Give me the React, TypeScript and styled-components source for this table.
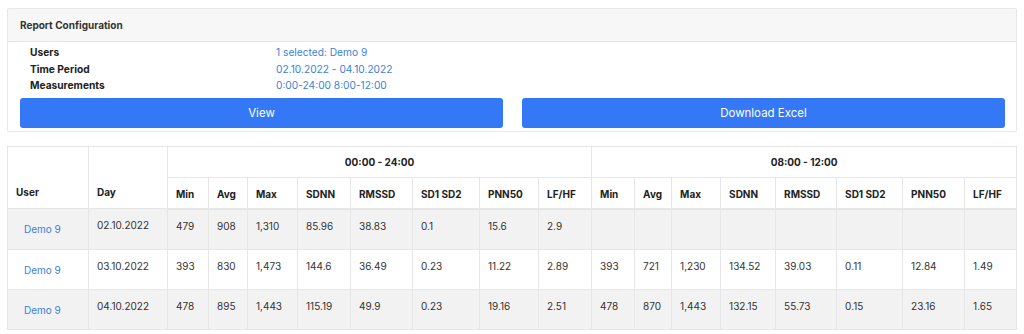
import React from "react";
import styled, { createGlobalStyle } from "styled-components";

const GlobalStyle = createGlobalStyle`
  body {
    margin: 0;
    background: #ffffff;
    font-family: Inter, "Liberation Sans", Arial, sans-serif;
    color: #2b2b2b;
  }
`;

const Page = styled.div`
  padding: 8px 8px 0 7px;
  display: flex;
  flex-direction: column;
  gap: 14px;
`;

const Card = styled.section`
  width: 1008px;
  border: 1px solid #e8e8e8;
  border-radius: 2px;
  background: #fff;
`;

const CardHeader = styled.div`
  height: 32px;
  display: flex;
  align-items: center;
  padding: 0 12px;
  background: #f7f7f7;
  border-bottom: 1px solid #e4e4e4;
  font-size: 10px;
  font-weight: 700;
  color: #333;
`;

const CardBody = styled.div`
  padding: 2px 11px 3px 12px;
`;

const ConfigList = styled.div`
  display: grid;
  grid-template-columns: 256px 1fr;
  font-size: 10.2px;
  line-height: 16.5px;
`;

const ConfigLabel = styled.div`
  padding-left: 10px;
  font-weight: 700;
  color: #222;
`;

const ConfigValue = styled.div`
  color: #3d7fd8;
`;

const Actions = styled.div`
  display: grid;
  grid-template-columns: 1fr 1fr;
  gap: 19px;
  margin-top: 4px;
`;

const ActionButton = styled.button`
  height: 30px;
  border: none;
  border-radius: 3px;
  background: #3478f6;
  color: #fff;
  font-family: inherit;
  font-size: 11.5px;
  cursor: pointer;
`;

const Table = styled.table`
  width: 1009px;
  border-collapse: collapse;
  table-layout: fixed;
  font-size: 10px;
  line-height: 14px;
  color: #333;
`;

const Col = styled.col<{ $w: number }>`
  width: ${(p) => p.$w}px;
`;

const Th = styled.th`
  border: 1px solid #e6e6e6;
  padding: 0 8px 9px;
  font-weight: 700;
  text-align: left;
  vertical-align: bottom;
  color: #222;
`;

const GroupTh = styled(Th)`
  padding: 8px 8px;
  vertical-align: middle;
  text-align: center;
`;

const SubTh = styled(Th)`
  padding: 9px 8px 7px;
  vertical-align: middle;
  border-bottom-width: 2px;
`;

const Tr = styled.tr<{ $striped: boolean }>`
  background: ${(p) => (p.$striped ? "#f2f2f2" : "#fff")};
`;

const Td = styled.td`
  border: 1px solid #e6e6e6;
  padding: 9px 8px 16px;
  vertical-align: top;
`;

const UserTd = styled(Td)`
  padding: 13px 8px 12px 16px;
`;

const UserLink = styled.a`
  color: #3d7fd8;
  text-decoration: none;
`;

const colWidths = [
  81, 79, 41, 39, 50, 53, 62, 67, 59, 53, 43, 37, 49, 55, 61, 66, 62, 52,
];

const metrics = ["Min", "Avg", "Max", "SDNN", "RMSSD", "SD1 SD2", "PNN50", "LF/HF"];

const rows = [
  {
    day: "02.10.2022",
    a: ["479", "908", "1,310", "85.96", "38.83", "0.1", "15.6", "2.9"],
    b: ["", "", "", "", "", "", "", ""],
  },
  {
    day: "03.10.2022",
    a: ["393", "830", "1,473", "144.6", "36.49", "0.23", "11.22", "2.89"],
    b: ["393", "721", "1,230", "134.52", "39.03", "0.11", "12.84", "1.49"],
  },
  {
    day: "04.10.2022",
    a: ["478", "895", "1,443", "115.19", "49.9", "0.23", "19.16", "2.51"],
    b: ["478", "870", "1,443", "132.15", "55.73", "0.15", "23.16", "1.65"],
  },
];

export default function App() {
  return (
    <>
      <GlobalStyle />
      <Page>
        <Card>
          <CardHeader>Report Configuration</CardHeader>
          <CardBody>
            <ConfigList>
              <ConfigLabel>Users</ConfigLabel>
              <ConfigValue>1 selected: Demo 9</ConfigValue>
              <ConfigLabel>Time Period</ConfigLabel>
              <ConfigValue>02.10.2022 - 04.10.2022</ConfigValue>
              <ConfigLabel>Measurements</ConfigLabel>
              <ConfigValue>0:00-24:00 8:00-12:00</ConfigValue>
            </ConfigList>
            <Actions>
              <ActionButton>View</ActionButton>
              <ActionButton>Download Excel</ActionButton>
            </Actions>
          </CardBody>
        </Card>

        <Table>
          <colgroup>
            {colWidths.map((w, i) => (
              <Col key={i} $w={w} />
            ))}
          </colgroup>
          <thead>
            <tr>
              <Th rowSpan={2}>User</Th>
              <Th rowSpan={2}>Day</Th>
              <GroupTh colSpan={8}>00:00 - 24:00</GroupTh>
              <GroupTh colSpan={8}>08:00 - 12:00</GroupTh>
            </tr>
            <tr>
              {[...metrics, ...metrics].map((m, i) => (
                <SubTh key={i}>{m}</SubTh>
              ))}
            </tr>
          </thead>
          <tbody>
            {rows.map((r, i) => (
              <Tr key={r.day} $striped={i % 2 === 0}>
                <UserTd>
                  <UserLink href="#">Demo 9</UserLink>
                </UserTd>
                <Td>{r.day}</Td>
                {[...r.a, ...r.b].map((v, j) => (
                  <Td key={j}>{v}</Td>
                ))}
              </Tr>
            ))}
          </tbody>
        </Table>
      </Page>
    </>
  );
}
